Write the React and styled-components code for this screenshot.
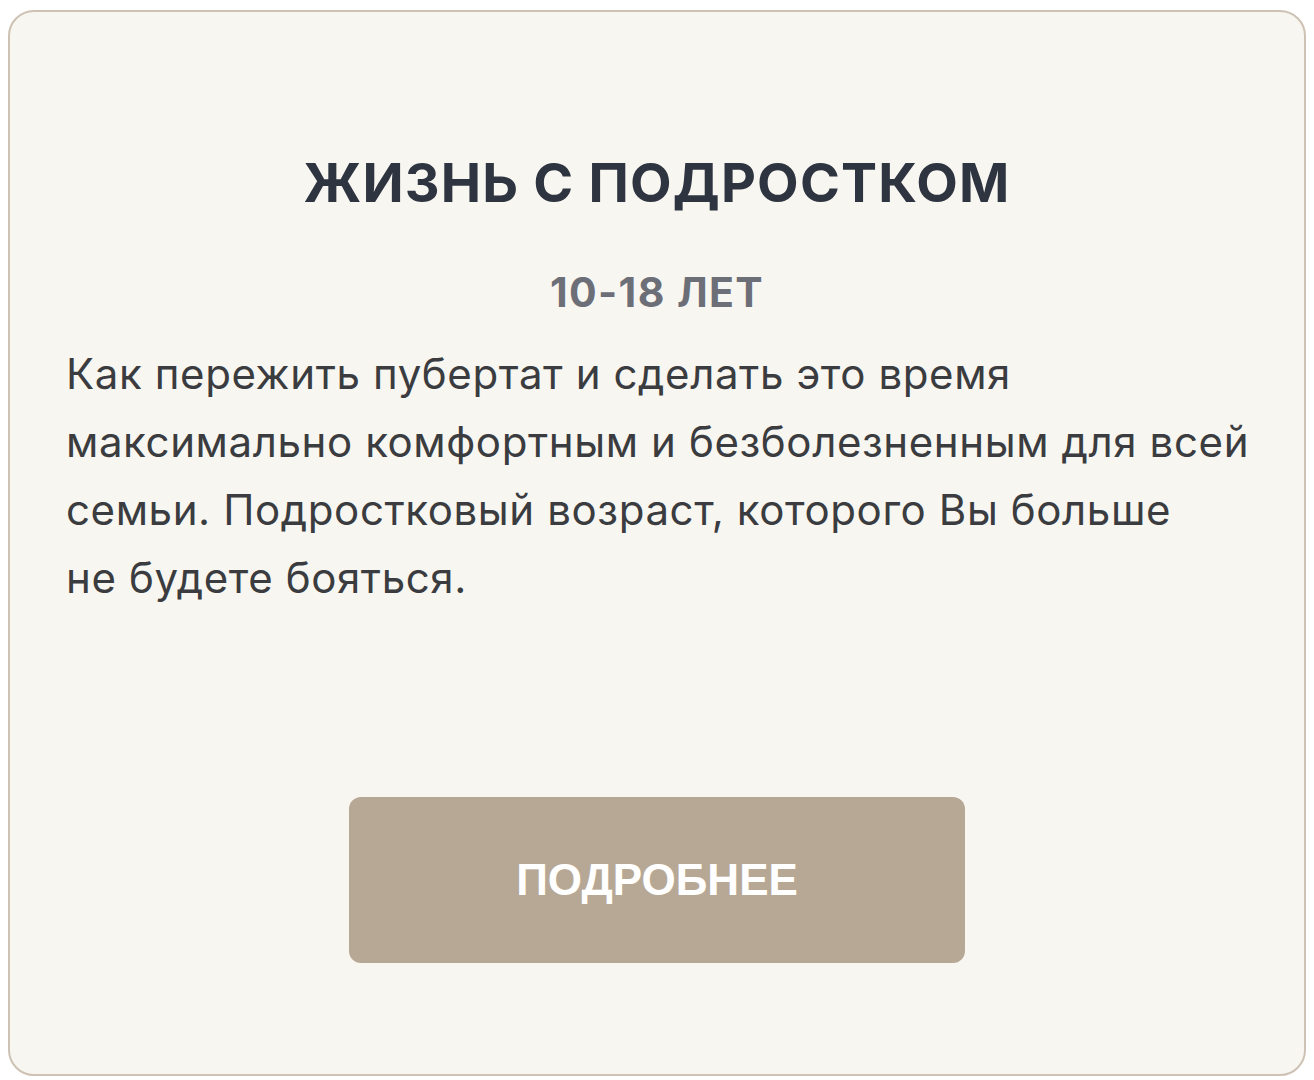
import React from "react";
import styled, { createGlobalStyle } from "styled-components";

const GlobalStyle = createGlobalStyle`
  html, body {
    margin: 0;
    padding: 0;
    background: #ffffff;
  }
  * {
    box-sizing: border-box;
  }
`;

const Page = styled.div`
  padding: 10px 8px 4px 8px;
  width: 1314px;
`;

const Card = styled.section`
  display: flex;
  flex-direction: column;
  align-items: center;
  height: 1066px;
  padding: 138px 48px 0;
  background: #f8f6f1;
  border: 2px solid #cdc2b4;
  border-radius: 26px;
  font-family: Inter, "Open Sans", sans-serif;
`;

const Title = styled.h2`
  margin: 0;
  font-size: 54px;
  line-height: 66px;
  font-weight: 700;
  color: #2e3440;
  text-transform: uppercase;
  letter-spacing: 1.2px;
`;

const Age = styled.div`
  margin-top: 50px;
  font-size: 41px;
  line-height: 52px;
  font-weight: 700;
  color: #6c6f77;
  letter-spacing: 1.4px;
`;

const Text = styled.p`
  align-self: stretch;
  margin: 22px 0 0;
  padding-left: 8px;
  font-size: 42px;
  line-height: 68px;
  font-weight: 400;
  color: #3a3c40;
  letter-spacing: 0.6px;
  white-space: nowrap;
`;

const MoreButton = styled.button`
  margin-top: 185px;
  width: 616px;
  height: 166px;
  border: none;
  border-radius: 12px;
  background: #b7a895;
  color: #ffffff;
  font-family: "Liberation Sans", Arial, sans-serif;
  font-weight: 700;
  font-size: 44px;
  cursor: pointer;
`;

export default function App() {
  return (
    <Page>
      <GlobalStyle />
      <Card>
        <Title>Жизнь с подростком</Title>
        <Age>10-18 ЛЕТ</Age>
        <Text>
          Как пережить пубертат и сделать это время
          <br />
          максимально комфортным и безболезненным для всей
          <br />
          семьи. Подростковый возраст, которого Вы больше
          <br />
          не&nbsp;будете бояться.
        </Text>
        <MoreButton>ПОДРОБНЕЕ</MoreButton>
      </Card>
    </Page>
  );
}
